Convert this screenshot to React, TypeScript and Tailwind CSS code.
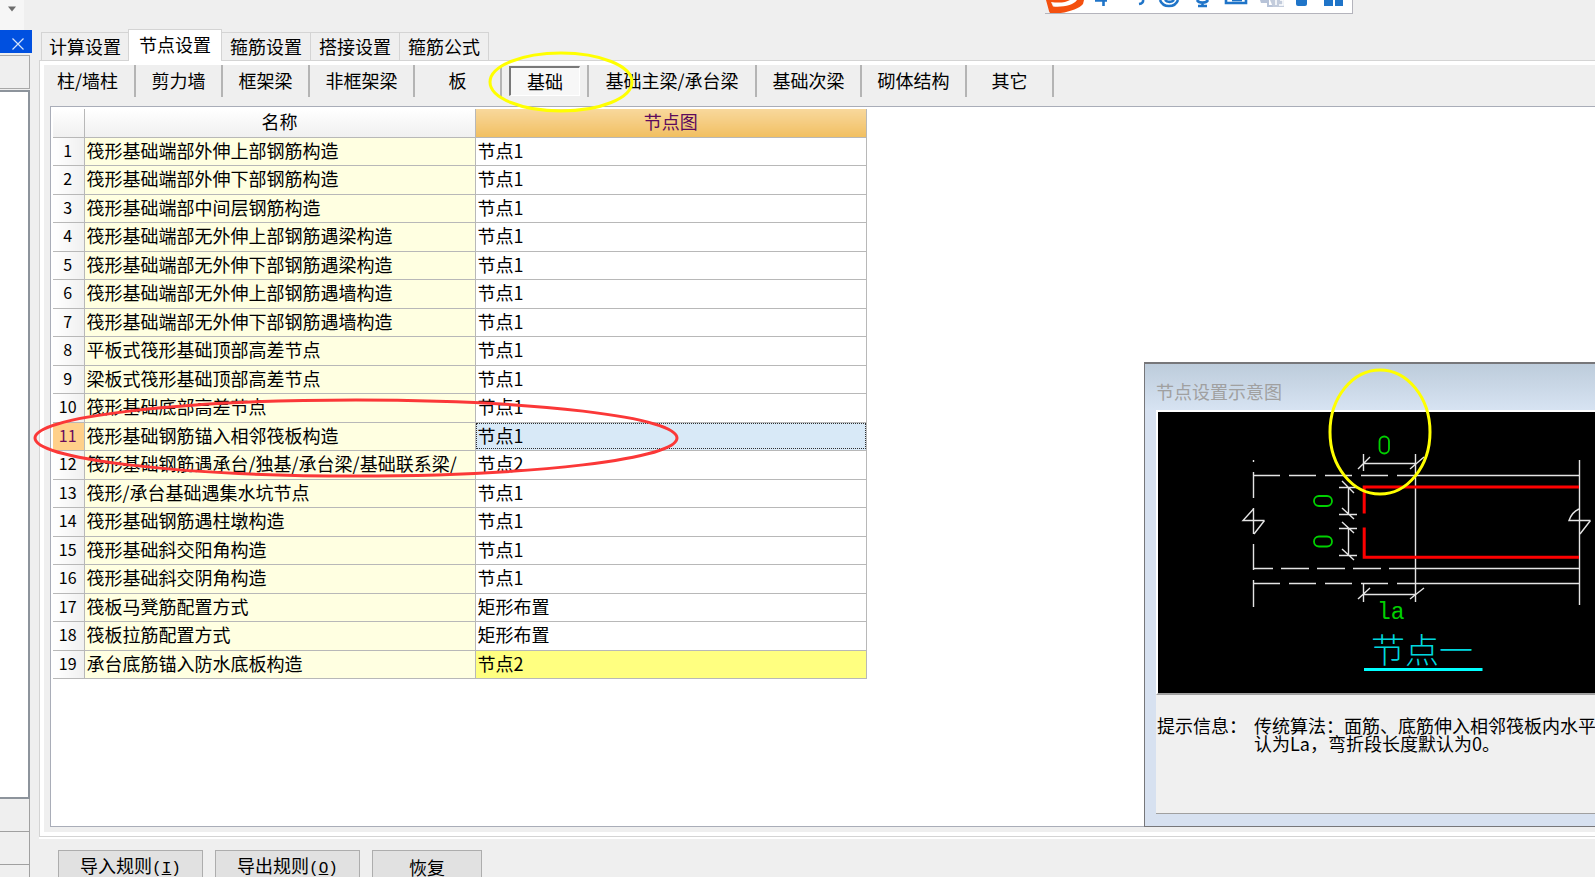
import { useState } from "react";

interface NodeRow {
  name: string;
  node: string;
}

const TABS = ["计算设置", "节点设置", "箍筋设置", "搭接设置", "箍筋公式"];

const CATEGORIES = [
  { label: "柱/墙柱", width: "w-[91px]" },
  { label: "剪力墙", width: "w-[87px]" },
  { label: "框架梁", width: "w-[87px]" },
  { label: "非框架梁", width: "w-[105px]" },
  { label: "板", width: "w-[87px]" },
  { label: "基础", width: "w-[87px]" },
  { label: "基础主梁/承台梁", width: "w-[168px]" },
  { label: "基础次梁", width: "w-[105px]" },
  { label: "砌体结构", width: "w-[105px]" },
  { label: "其它", width: "w-[87px]" },
];

const ROWS: NodeRow[] = [
  { name: "筏形基础端部外伸上部钢筋构造", node: "节点1" },
  { name: "筏形基础端部外伸下部钢筋构造", node: "节点1" },
  { name: "筏形基础端部中间层钢筋构造", node: "节点1" },
  { name: "筏形基础端部无外伸上部钢筋遇梁构造", node: "节点1" },
  { name: "筏形基础端部无外伸下部钢筋遇梁构造", node: "节点1" },
  { name: "筏形基础端部无外伸上部钢筋遇墙构造", node: "节点1" },
  { name: "筏形基础端部无外伸下部钢筋遇墙构造", node: "节点1" },
  { name: "平板式筏形基础顶部高差节点", node: "节点1" },
  { name: "梁板式筏形基础顶部高差节点", node: "节点1" },
  { name: "筏形基础底部高差节点", node: "节点1" },
  { name: "筏形基础钢筋锚入相邻筏板构造", node: "节点1" },
  { name: "筏形基础钢筋遇承台/独基/承台梁/基础联系梁/", node: "节点2" },
  { name: "筏形/承台基础遇集水坑节点", node: "节点1" },
  { name: "筏形基础钢筋遇柱墩构造", node: "节点1" },
  { name: "筏形基础斜交阳角构造", node: "节点1" },
  { name: "筏形基础斜交阴角构造", node: "节点1" },
  { name: "筏板马凳筋配置方式", node: "矩形布置" },
  { name: "筏板拉筋配置方式", node: "矩形布置" },
  { name: "承台底筋锚入防水底板构造", node: "节点2" },
];

const CHANGED_ROW = 18;

function SidePanel() {
  return (
    <aside className="flex w-8 shrink-0 flex-col">
      <div className="flex h-[30px] w-6 items-start bg-[#f6f6f6] pt-[6px] pl-2">
        <svg className="h-[6px] w-2" viewBox="0 0 8 6">
          <path d="M0 0.5H8L4 5.5Z" fill="#6d6d6d" />
        </svg>
      </div>
      <button aria-label="关闭" className="flex h-[23px] w-8 items-center justify-end bg-[#0050e0] pt-1 pr-2">
        <svg className="h-3 w-3" viewBox="0 0 12 12" stroke="#d5e3fa" strokeWidth="1.2">
          <path d="M0.5 0.5L11.5 11.5M11.5 0.5L0.5 11.5" />
        </svg>
      </button>
      <div className="mt-[2px] h-[34px] w-[30px] border-t border-r border-b border-[#a8a8a8]" />
      <div className="mt-px w-[30px] flex-1 border-t-2 border-r-2 border-b-2 border-[#8d949c] bg-white" />
      <div className="h-[33px] w-[30px] border-r border-b border-[#a0a0a0]" />
      <div className="h-[33px] w-[30px] border-r border-b border-[#a0a0a0]" />
      <div className="h-3 w-[30px] border-r border-[#a0a0a0]" />
    </aside>
  );
}

function ImeBar() {
  return (
    <div className="absolute top-0 right-[242px] h-[14px] w-[308px] border-r border-b border-[#b4b4bc]">
      <svg className="h-[13px] w-[307px]" viewBox="0 0 307 13">
        <path d="M6 0H307V13H12Z" fill="#fff" />
        <path
          d="M1 0L4 11C4.500 13 6 14 9 13.600C22 13 34 9 38 4L39 0H32C29 5 18 7.500 8 6.500L6 2C14 3.200 21 2.500 25 0Z"
          fill="#f4500f"
        />
        <g fill="none" stroke="#1f74c8" strokeWidth="2.600">
          <path d="M50 0.500H62M58.500 0V6" />
          <path d="M98 0C98.500 2 97 3.500 94 4" />
          <path d="M115 0C118 8 130 8 133 0M120 0C122 2.500 127 2.500 129 0" />
          <path d="M152 0C154 3.500 161 3.500 163 0M157.500 2V6M153 6H162" />
          <path d="M181 0V3H201V0M187 0H197" />
        </g>
        <path d="M215 0H224V5H228V7H222V3H216Z" fill="#b7c3d8" />
        <path d="M225 0H239V7H228Z" fill="#c3ccdc" />
        <path d="M231 0V5M235 0H238V5H234" stroke="#fff" strokeWidth="1.500" fill="none" />
        <path d="M251 0H262V4Q262 6 260 6H253Q251 6 251 4Z" fill="#1f74c8" />
        <path d="M279 0H288V6H279ZM290 0H298V6H290Z" fill="#1f74c8" />
      </svg>
    </div>
  );
}

function NodeDiagram() {
  return (
    <svg
      className="block h-[281px] w-[440px]"
      viewBox="1158 412 440 281"
      fill="none"
      stroke="#e4e4e4"
      strokeWidth="1.4"
    >
      <path d="M1253.500 460V462M1253.500 472V498M1253.500 508V534M1253.500 544V570M1253.500 580V607" />
      <path d="M1253.500 475.500H1280M1289 475.500H1316M1325 475.500H1352M1361 475.500H1388M1397 475.500H1579" />
      <path d="M1253.500 568.500H1273M1281 568.500H1309M1317 568.500H1345M1353 568.500H1381M1389 568.500H1579" />
      <path d="M1253.500 583.500H1280M1289 583.500H1316M1325 583.500H1352M1361 583.500H1388M1397 583.500H1579" />
      <path d="M1579.500 460V605M1415.500 454V602" />
      <path d="M1264.500 520.500H1243L1253.500 509M1264.500 520.500L1254 534M1590.500 520.500H1569Q1572 512 1579 509M1590.500 520.500L1580 534" />
      {/* horizontal dimensions */}
      <path d="M1363.500 454V471M1363.500 463.500H1416M1358 469L1370 457M1410 469L1424 457" />
      <path d="M1363.500 583V602M1363.500 594.500H1416M1358 599L1370 588M1410 599L1424 588" />
      {/* vertical dimensions */}
      <path d="M1348.500 487V514M1339 487.500H1357M1339 514.500H1357M1342 481L1354 493M1342 508L1354 519" />
      <path d="M1348.500 528V555M1339 528.500H1357M1339 555.500H1357M1342 522L1354 533M1342 549L1354 560" />
      <path d="M1364.200 513.500V487H1579M1364.200 527.500V557.200H1579" stroke="#f00" strokeWidth="3" />
      <g stroke="#00d000" strokeWidth="1.800">
        <rect x="1379.500" y="436.500" width="9.500" height="17" rx="4.700" />
        <rect x="1314" y="496" width="18" height="10" rx="5" />
        <rect x="1314" y="536.500" width="18" height="10" rx="5" />
      </g>
      <text x="1377" y="619" className="font-['Liberation_Mono',monospace] text-[23px]" fill="#00d000" stroke="none">
        la
      </text>
      <text x="1371" y="663" className="text-[34px] font-light" fill="#00d7df" stroke="none">
        节点一
      </text>
      <path d="M1364 669.500H1482.500" stroke="#0ff" strokeWidth="3" />
    </svg>
  );
}

function NodePreview() {
  return (
    <section className="absolute right-0 bottom-[-1px] flex h-[465px] w-[451px] flex-col overflow-hidden border-t-2 border-b border-l border-[#77777a] bg-[#d7e1f0] pb-3 pl-[11px]">
      <h2 className="-ml-[11px] flex h-[46px] shrink-0 items-center bg-linear-to-b from-[#bdccdb] to-[#d7e3f2] pt-2 pl-[11px] text-[#a0a0a0]">
        节点设置示意图
      </h2>
      <div className="border-t-2 border-b-2 border-l-2 border-t-white border-b-[#a0a0a0] border-l-white bg-black">
        <NodeDiagram />
      </div>
      <div className="flex flex-1 border-b border-[#a0a0a0] bg-[#f0f0f0] pt-[21px] pl-px leading-[18px] whitespace-nowrap text-black">
        <p className="w-[97px] shrink-0">提示信息：</p>
        <p>
          传统算法：面筋、底筋伸入相邻筏板内水平
          <br />
          认为La，弯折段长度默认为0。
        </p>
      </div>
    </section>
  );
}

export default function App() {
  const [tab, setTab] = useState("节点设置");
  const [category, setCategory] = useState("基础");
  const [selected, setSelected] = useState(10);

  return (
    <div className="relative flex h-screen overflow-hidden bg-[#efefef] font-['Noto_Sans_CJK_SC',sans-serif] text-[18px] leading-6 text-black">
      <SidePanel />

      <main className="ml-[7px] flex min-w-0 flex-1 flex-col pt-[29px]">
        <div role="tablist" className="flex h-[31px] shrink-0 items-end pl-[2px]">
          {TABS.map((t) => (
            <button
              key={t}
              role="tab"
              aria-selected={t === tab}
              onClick={() => setTab(t)}
              className={
                t === tab
                  ? "relative z-10 -mb-px h-8 w-[94px] border-x border-t border-[#d4d4d4] bg-white pb-1"
                  : "h-7 w-[89px] border-t border-r border-[#d4d4d4] pb-px first:w-[87px] first:border-r-0 first:border-l"
              }
            >
              {t}
            </button>
          ))}
        </div>

        <div className="flex min-h-0 flex-1 flex-col border-t border-b border-l border-[#d4d4d4] bg-white pt-1 pb-1 pl-1">
          <div className="flex min-h-0 flex-1 flex-col bg-[#efefef] pb-[5px] pl-[6px]">
            <nav className="-ml-[5px] flex h-[41px] shrink-0 items-start">
              {CATEGORIES.map((c) => (
                <div
                  key={c.label}
                  className={`flex h-8 items-center justify-center border-r-2 border-[#b4b4b4] first:pr-1 ${c.width}`}
                >
                  <button
                    onClick={() => setCategory(c.label)}
                    className={
                      c.label === category
                        ? "h-[30px] w-[71px] border-t-2 border-r border-b border-l-2 border-t-[#787878] border-r-white border-b-white border-l-[#787878] bg-[#f7f7f7] pb-[2px]"
                        : "pb-[2px] whitespace-nowrap"
                    }
                  >
                    {c.label}
                  </button>
                </div>
              ))}
            </nav>

            <div className="relative min-h-0 flex-1 border-t border-b border-l border-[#a9adb8] bg-white pt-[2px] pl-[2px]">
              <table className="w-[814px] table-fixed border-collapse">
                <thead>
                  <tr className="h-[28px] bg-linear-to-b from-white to-[#f0f0f0]">
                    <th className="w-[31px] border-r border-b border-[#b8b8b8]" />
                    <th className="w-[391px] border-r border-b border-[#b8b8b8] p-0 pb-[3px] font-normal">名称</th>
                    <th className="border-r border-b border-[#b8b8b8] bg-linear-to-b from-[#f8d89c] to-[#f1bf60] p-0 pb-[3px] font-normal text-[#5c0a5c]">
                      节点图
                    </th>
                  </tr>
                </thead>
                <tbody>
                  {ROWS.map((row, i) => (
                    <tr key={i} onClick={() => setSelected(i)} className="odd:h-[28px] even:h-[29px]">
                      <th
                        className={`border-r border-b border-[#b8b8b8] p-0 pr-px pb-[3px] text-base font-normal ${
                          i === selected ? "bg-[#ffd08a] text-[#6a0a5c]" : "bg-linear-to-r from-white to-[#f0f0f0]"
                        }`}
                      >
                        {i + 1}
                      </th>
                      <td className="overflow-hidden border-r border-b border-[#b8b8b8] bg-[#ffffe1] p-0 pb-[3px] pl-[2px] whitespace-nowrap">
                        {row.name}
                      </td>
                      <td
                        className={`border-r border-b border-[#b8b8b8] p-0 pb-[3px] pl-[2px] ${
                          i === selected
                            ? "bg-[#d8e9f7] outline-1 -outline-offset-2 outline-[#303030] outline-dotted"
                            : i === CHANGED_ROW
                              ? "bg-[#ffff80]"
                              : "bg-white"
                        }`}
                      >
                        {row.node}
                      </td>
                    </tr>
                  ))}
                </tbody>
              </table>
              <NodePreview />
            </div>
          </div>
        </div>

        <footer className="flex h-10 shrink-0 gap-3 border-t-2 border-white pt-[11px] pl-[19px]">
          <button className="h-9 w-[145px] shrink-0 border border-[#adadad] bg-[#e1e1e1] pb-[3px]">
            导入规则
            <span className="font-['Liberation_Mono',monospace] text-base">
              (<u>I</u>)
            </span>
          </button>
          <button className="h-9 w-[145px] shrink-0 border border-[#adadad] bg-[#e1e1e1] pb-[3px]">
            导出规则
            <span className="font-['Liberation_Mono',monospace] text-base">
              (<u>O</u>)
            </span>
          </button>
          <button className="h-9 w-[110px] shrink-0 border border-[#adadad] bg-[#e1e1e1] pb-[3px]">恢复</button>
        </footer>
      </main>

      <ImeBar />

      {/* hand-drawn marks */}
      <svg className="pointer-events-none absolute top-0 left-0 z-20 h-[500px] w-[700px]" fill="none" strokeWidth="3">
        <ellipse cx="561" cy="82" rx="71" ry="29" stroke="#ff0" />
        <ellipse cx="356" cy="438" rx="321" ry="38" stroke="#fb3838" />
      </svg>
      <svg className="pointer-events-none absolute top-[365px] right-[162px] z-20 h-[134px] w-[106px]" fill="none" strokeWidth="3">
        <ellipse cx="53" cy="67" rx="50" ry="62" stroke="#ff0" />
      </svg>
    </div>
  );
}
